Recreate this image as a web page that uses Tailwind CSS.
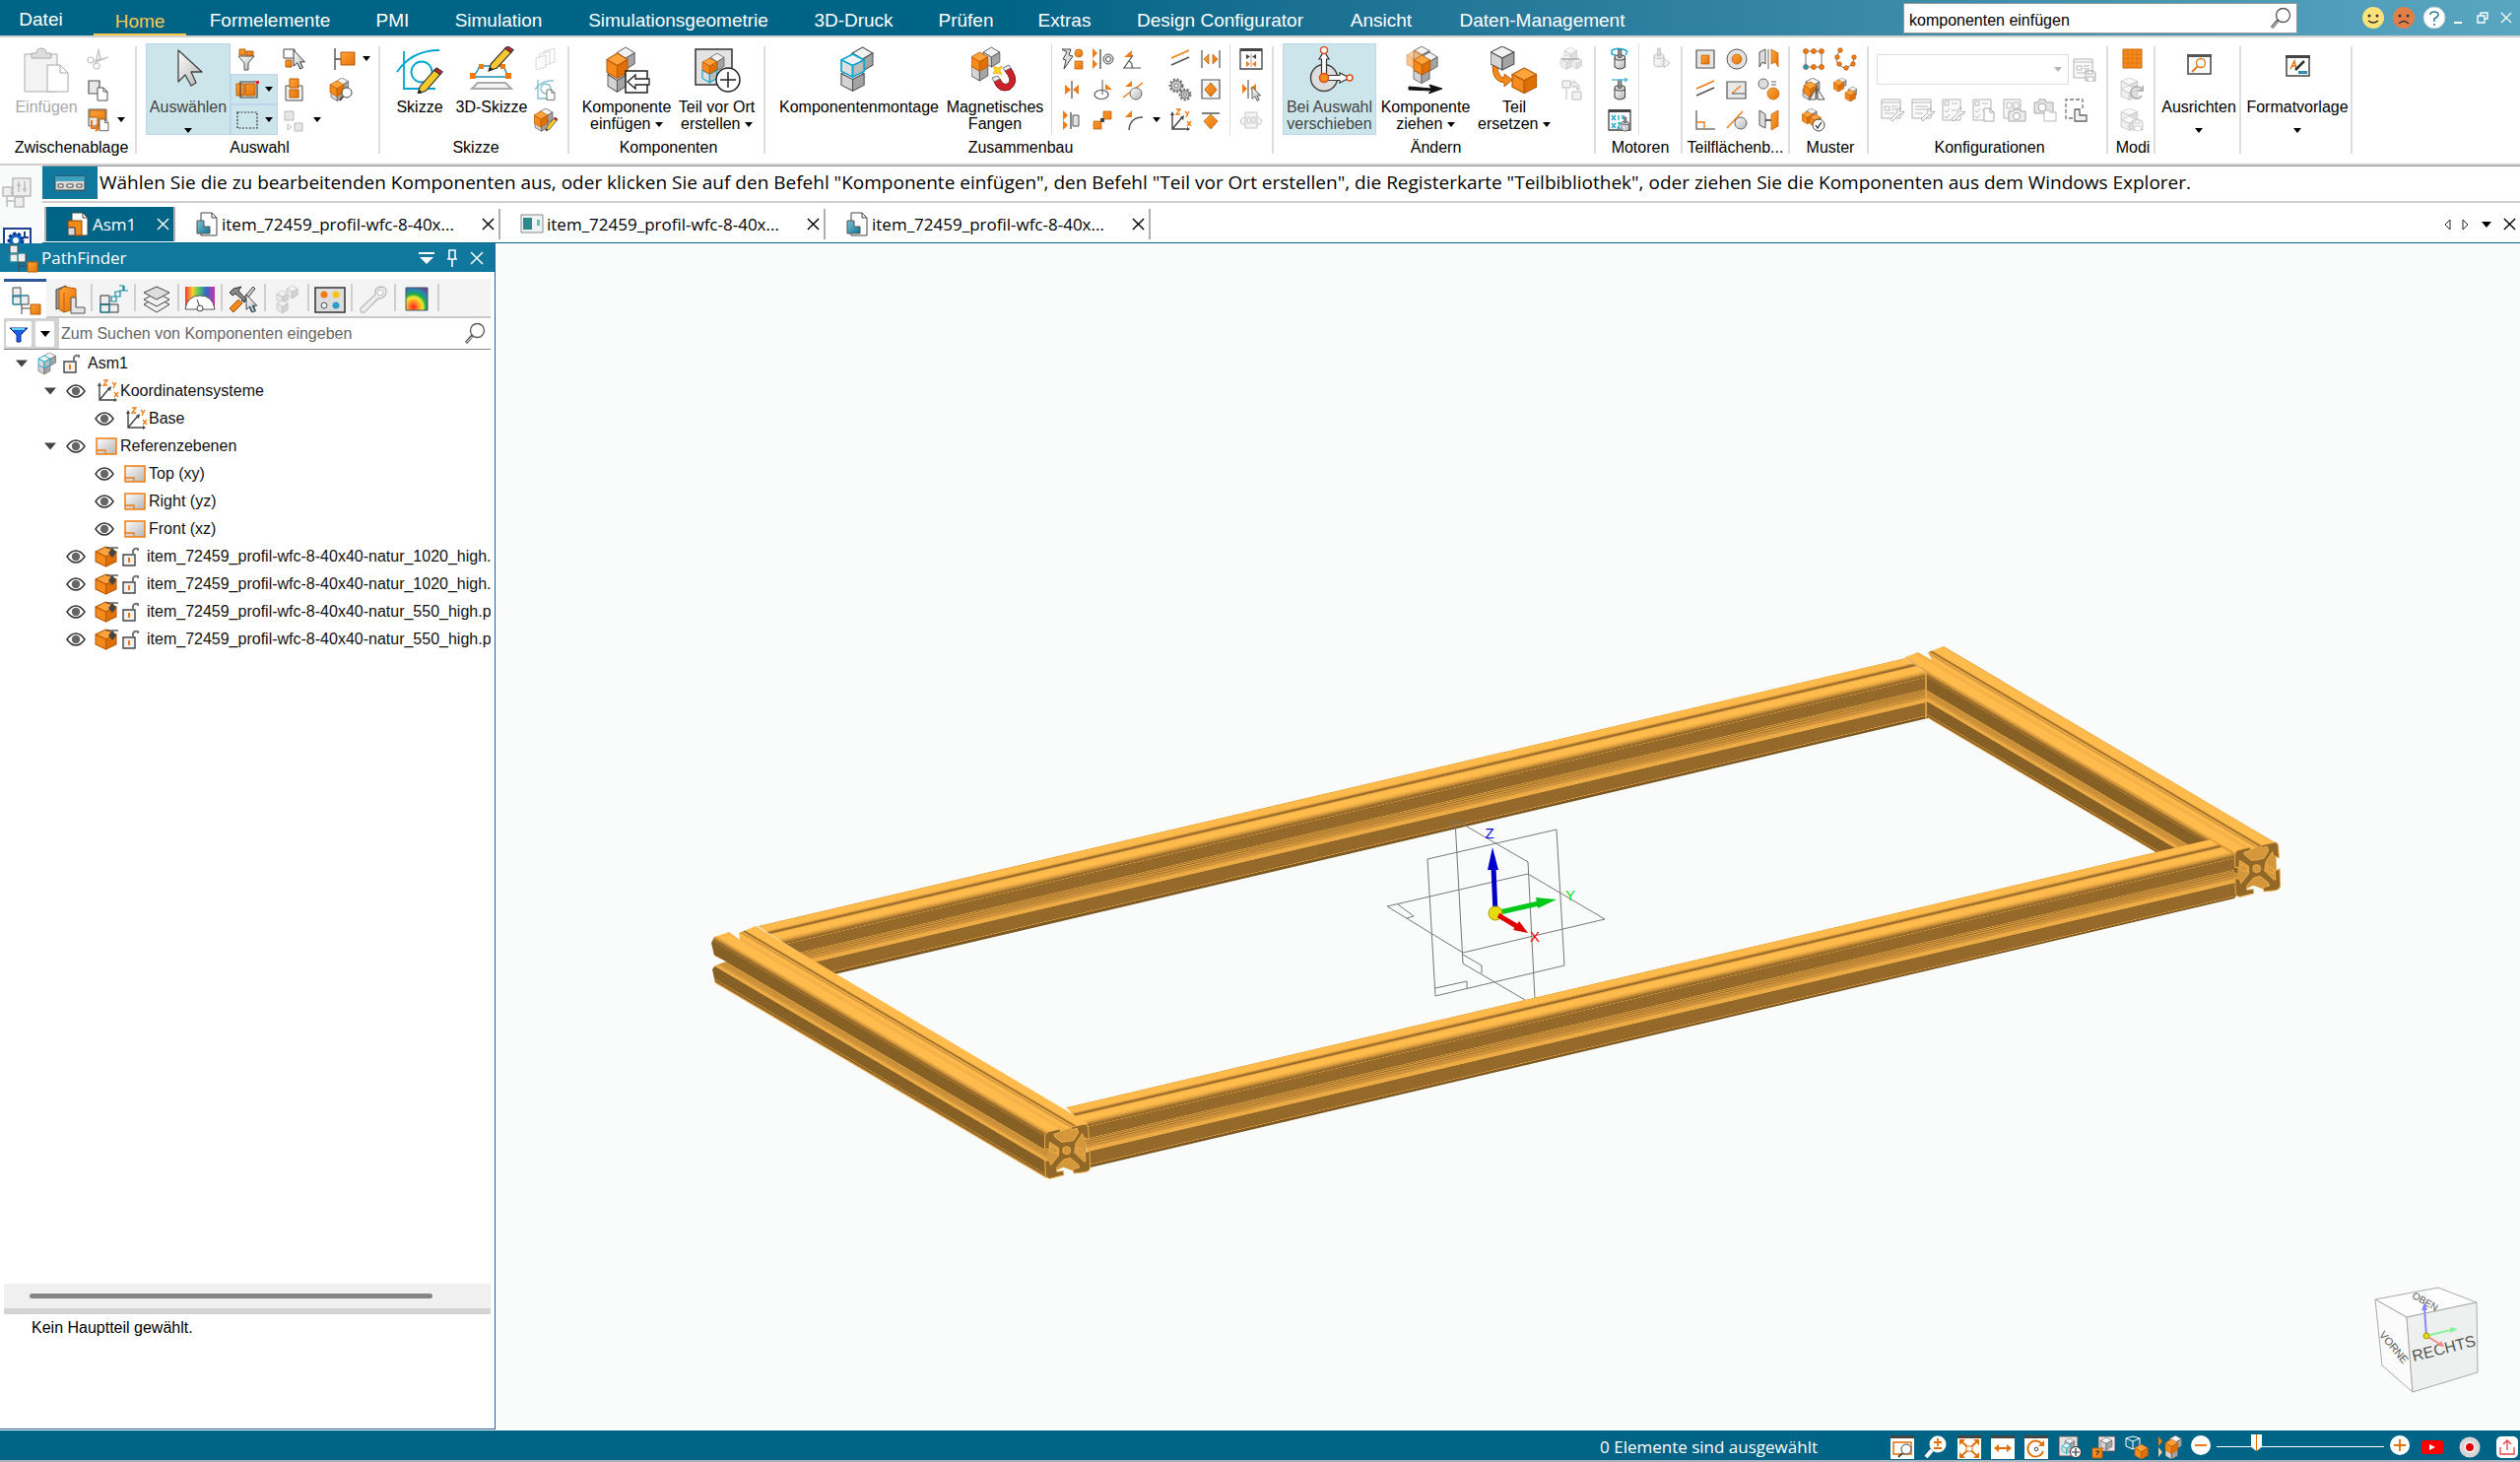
<!DOCTYPE html>
<html lang="de">
<head>
    <meta charset="UTF-8">
    <title>Asm1</title>
    <script src="https://cdn.jsdelivr.net/npm/@tailwindcss/browser@4"></script>
</head>
<body class="flex flex-col h-screen overflow-hidden bg-white text-base text-black font-['Liberation_Sans',Arial,sans-serif]">

    <!-- Icon library -->
    <svg class="absolute w-0 h-0" aria-hidden="true">
        <defs>
            <linearGradient id="gO" x1="0" y1="0" x2="1" y2="1"><stop offset="0" stop-color="#ffa53a"/><stop offset="1" stop-color="#e57208"/></linearGradient>
            <linearGradient id="gG" x1="0" y1="0" x2="1" y2="1"><stop offset="0" stop-color="#fff"/><stop offset="1" stop-color="#b4b4b4"/></linearGradient>
            <linearGradient id="gB" x1="0" y1="0" x2="1" y2="1"><stop offset="0" stop-color="#7cc4d8"/><stop offset="1" stop-color="#12718f"/></linearGradient>
            <linearGradient id="gRain" x1="0" y1="0" x2="1" y2="0"><stop offset="0" stop-color="#f33"/><stop offset=".25" stop-color="#fc3"/><stop offset=".45" stop-color="#5c5"/><stop offset=".7" stop-color="#36c"/><stop offset="1" stop-color="#c3a"/></linearGradient>
            <radialGradient id="gHeat" cx=".35" cy=".85" r=".95"><stop offset="0" stop-color="#f22"/><stop offset=".3" stop-color="#fa2"/><stop offset=".45" stop-color="#ee3"/><stop offset=".6" stop-color="#2a4"/><stop offset=".8" stop-color="#28b"/><stop offset="1" stop-color="#748"/></radialGradient>
            <!-- isometric cubes, 14 x 16 -->
            <g id="cubeO" stroke="#b85c08" stroke-width=".7" stroke-linejoin="round"><path d="M7 0 14 4 7 8 0 4Z" fill="#ffa43c"/><path d="M0 4 7 8V16L0 12Z" fill="#f5891a"/><path d="M14 4 7 8V16L14 12Z" fill="#e06f06"/></g>
            <g id="cubeG" stroke="#555" stroke-width=".7" stroke-linejoin="round"><path d="M7 0 14 4 7 8 0 4Z" fill="#f2f2f2"/><path d="M0 4 7 8V16L0 12Z" fill="#d4d4d4"/><path d="M14 4 7 8V16L14 12Z" fill="#a4a4a4"/></g>
            <g id="cubeC" stroke="#00a5cf" stroke-width="1" stroke-linejoin="round"><path d="M7 0 14 4 7 8 0 4Z" fill="#f2f2f2"/><path d="M0 4 7 8V16L0 12Z" fill="#dedede"/><path d="M14 4 7 8V16L14 12Z" fill="#bcbcbc"/></g>
            <g id="ptr"><path d="M0 0V17L4 13.500 7 20 10 18.500 7 12.500H12Z" fill="url(#gG)" stroke="#333" stroke-linejoin="round"/></g>
            <g id="pen"><path d="M0 24 2 17 14 2 19 6 7 21Z" fill="#f7c92e" stroke="#333"/><path d="M14 2 16 0 21 3.500 19 6Z" fill="#d8232a" stroke="#333"/><path d="M0 24 1 20 4 22Z" fill="#222"/></g>
            <g id="page"><path d="M0 0H6L10 4V13H0Z" fill="#fff" stroke="#555"/><path d="M6 0V4H10" fill="none" stroke="#555"/></g>
            <g id="floppy"><path d="M0 0H8L10 2V10H0Z" fill="#e4e4e4" stroke="#555"/><path d="M2 0H7V3H2ZM2 10V6H8V10" fill="#fff" stroke="#555" stroke-width=".8"/></g>
            <g id="wrench"><path d="M0 12 7 5Q6 1 10 0L9 3 11 5 14 4Q13 8 9 7L2 14Z" fill="#f4f4f4" stroke="#555" stroke-width=".9"/></g>
            <g id="cyl"><path d="M0 8V17Q5 21 10 17V8" fill="url(#gG)" stroke="#444"/><ellipse cx="5" cy="8" rx="5" ry="2.500" fill="#ddd" stroke="#444"/><path d="M3.500 0H6.500V8H3.500Z" fill="#999" stroke="#444" stroke-width=".8"/></g>
        </defs>

        <symbol id="caret" viewBox="0 0 10 6"><path d="M0 0H10L5 6Z" fill="currentColor"/></symbol>
        <symbol id="close" viewBox="0 0 14 14"><path d="M1 1 13 13M13 1 1 13" stroke="currentColor" stroke-width="1.500" fill="none"/></symbol>
        <symbol id="glass" viewBox="0 0 24 24"><circle cx="14.500" cy="8.500" r="7" fill="#fff" stroke="#555" stroke-width="1.300"/><path d="M9.500 13.500 3 21" stroke="#555" stroke-width="3"/><path d="M9 14.500 3.500 20.500" stroke="#fff" stroke-width="1"/></symbol>

        <!-- large ribbon icons -->
        <symbol id="b-paste" viewBox="0 0 48 48"><path d="M2 8H35V46H2Z" fill="#f3f3f3" stroke="#aaa"/><path d="M9 12V7H14Q14 2 19 2T24 7H29V12Z" fill="#ddd" stroke="#aaa"/><path d="M25 19H38L46 27V46H25Z" fill="#fff" stroke="#aaa"/><path d="M38 19V27H46" fill="none" stroke="#aaa"/></symbol>
        <symbol id="b-select" viewBox="0 0 48 48"><path d="M14 4V36L21 29 27 40 32 37 27 26H38Z" fill="url(#gG)" stroke="#444" stroke-width="1.300" stroke-linejoin="round"/></symbol>
        <symbol id="b-sketch" viewBox="0 0 48 48"><path d="M8 5V43H40M1 26Q16 4 44 4" fill="none" stroke="#00a5cf" stroke-width="1.800"/><circle cx="26" cy="26" r="10.500" fill="none" stroke="#00a5cf" stroke-width="1.800"/><use href="#pen" transform="translate(22 22) scale(1.200 1.100)"/></symbol>
        <symbol id="b-sketch3d" viewBox="0 0 48 48"><path d="M10 37H38L44 43H4Z" fill="#f4f4f4" stroke="#aaa" stroke-width="2"/><path d="M5 31Q9 27 12 20H36L41 31Z" fill="#fff" stroke="#1f8fb0" stroke-width="1.500"/><g fill="#f07a10"><path d="M2 27H8V33H2ZM38 27H44V33H38ZM11 18H16V23H11ZM33 18H38V23H33Z"/></g><use href="#pen" transform="translate(21 0) scale(1.200 1.050)"/></symbol>
        <symbol id="b-insert" viewBox="0 0 48 48"><use href="#cubeG" transform="translate(14 1) scale(1.300 1.400)"/><use href="#cubeG" transform="translate(5 23) scale(1.350 1.450)"/><use href="#cubeO" transform="translate(4 7) scale(1.500 1.600)"/><path d="M23 25H45V47H23Z" fill="#fff" stroke="#222" stroke-width="1.500"/><path d="M25 36 33 29V33H47V39H33V43Z" fill="#fff" stroke="#222" stroke-width="1.300"/></symbol>
        <symbol id="b-inplace" viewBox="0 0 48 48"><path d="M2 3H39V39H2Z" fill="#e3e3e3" stroke="#333" stroke-width="1.500"/><use href="#cubeG" transform="translate(17 7) scale(1 1.100)"/><use href="#cubeC" transform="translate(9 20) scale(1.050 1.050)"/><use href="#cubeO" transform="translate(9 12) scale(1.050 1)"/><circle cx="35" cy="34" r="12" fill="#fff" stroke="#222" stroke-width="1.500"/><path d="M35 26V42M27 34H43" stroke="#222" stroke-width="1.500"/></symbol>
        <symbol id="b-mount" viewBox="0 0 48 48"><use href="#cubeG" transform="translate(17 1) scale(1.500 1.500)"/><use href="#cubeG" transform="translate(6 22) scale(1.650 1.450)"/><use href="#cubeC" transform="translate(6 8) scale(1.650 1.450)"/></symbol>
        <symbol id="b-magnet" viewBox="0 0 48 48"><use href="#cubeG" transform="translate(12 1) scale(1.200 1.250)"/><use href="#cubeG" transform="translate(0 15) scale(1.200 1.250)"/><use href="#cubeO" transform="translate(0 6) scale(1.200 1.200)"/><path d="M23 36Q28 48 39 44Q50 36 40 22L34 25Q42 34 37 38Q32 40 29 33Z" fill="#cc2229" stroke="#861016"/><path d="M40 22 34 25 32 22 38 19ZM23 36 29 33 27 30 21 32Z" fill="#eee" stroke="#777"/><path d="M22 20 27 22 31 20 29 25 31 29 26 27 22 28 24 24Z" fill="#ffd21e" stroke="#d89a00" stroke-width=".6"/></symbol>
        <symbol id="b-move" viewBox="0 0 48 48"><circle cx="18" cy="32" r="13.500" fill="#ddd" stroke="#444" stroke-width="1.500"/><path d="M15.500 32V13H13L18 5 23 13H20.500V29.500H34V27L44 32 34 37V34.500H18Z" fill="#fff" stroke="#333" stroke-width="1.200"/><g fill="#fff" stroke="#d8501c" stroke-width="1.500"><circle cx="18" cy="4" r="3.500"/><circle cx="44" cy="32" r="3"/><circle cx="18" cy="32" r="4.500" fill="#f98b1c"/></g></symbol>
        <symbol id="b-drag" viewBox="0 0 48 48"><use href="#cubeG" transform="translate(12 0) scale(1.150)"/><use href="#cubeG" transform="translate(20 6) scale(1.150 1.200)"/><use href="#cubeG" transform="translate(12 20) scale(1.150 1.100)"/><use href="#cubeO" opacity=".5" transform="translate(5 4) scale(1.200)"/><use href="#cubeO" transform="translate(12 9) scale(1.200 1.250)"/><path d="M7 41 30 43 28 39 41 43 27 48 30 45 7 44Z" fill="#111" stroke="#111"/></symbol>
        <symbol id="b-replace" viewBox="0 0 48 48"><use href="#cubeG" transform="translate(0 0) scale(1.700 1.500)"/><use href="#cubeO" transform="translate(22 22) scale(1.750 1.600)"/><path d="M2 20Q2 36 14 37V41L22 34 14 28V32Q8 31 7 22Z" fill="#f58a1c" stroke="#b85c08"/></symbol>
        <symbol id="b-align" viewBox="0 0 48 48"><path d="M13 9H36V28H13Z" fill="#fff" stroke="#444" stroke-width="1.500"/><path d="M12 8H37V11H12Z" fill="#555"/><circle cx="26" cy="17" r="4.500" fill="#fff" stroke="#e8770f" stroke-width="1.300"/><path d="M23 20 17 26" stroke="#e8770f" stroke-width="1.800"/></symbol>
        <symbol id="b-style" viewBox="0 0 48 48"><path d="M13 10H36V30H13Z" fill="#fff" stroke="#444" stroke-width="1.500"/><path d="M12 9H37V12H12Z" fill="#444"/><path d="M17 23 21 15 23 23M18 20H23" fill="none" stroke="#e8770f" stroke-width="1.500"/><path d="M22 24 31 15" stroke="#333" stroke-width="2.500"/><path d="M25 25H34V28H25Z" fill="#2c8fb0"/></symbol>

        <!-- small ribbon icons -->
        <symbol id="s-cut" viewBox="0 0 24 24"><g fill="none" stroke="#c4c4c4" stroke-width="1.200"><circle cx="5" cy="13" r="3"/><circle cx="11" cy="19" r="3"/><path d="M8 14 23 10 11 15M10 16 13 2 15 11Z" fill="#eee"/></g></symbol>
        <symbol id="s-copy" viewBox="0 0 24 24"><path d="M3 3H14V16H3Z" fill="#e8e8e8" stroke="#555" stroke-width="1.200"/><use href="#page" transform="translate(12 10)"/></symbol>
        <symbol id="s-pasteas" viewBox="0 0 24 24"><path d="M3 1H21V18H3Z" fill="#e9e9e9" stroke="#555"/><path d="M4 2H20V17H12V9H4Z" fill="url(#gO)" stroke="#b85c08"/><path d="M6 12V20H13M10 17 14 20 10 23" fill="none" stroke="#e8770f" stroke-width="2"/><use href="#page" transform="translate(14 11) scale(.9)"/></symbol>
        <symbol id="s-filter" viewBox="0 0 24 24"><path d="M5 2H11V8H5ZM12 4H19V9H12Z" fill="url(#gO)" stroke="#b85c08"/><path d="M4 9H20L14 16V23H10V16Z" fill="url(#gG)" stroke="#555"/></symbol>
        <symbol id="s-box" viewBox="0 0 24 24"><path d="M1 6H9V18H1ZM10 6H20V18H10Z" fill="url(#gO)" stroke="#b85c08"/><path d="M5 4H22V20H5Z" fill="none" stroke="#444" stroke-width="1.200"/><path d="M21 3H24V6H21Z" fill="#e22"/></symbol>
        <symbol id="s-dash" viewBox="0 0 24 24"><path d="M2 4H22V20H2Z" fill="none" stroke="#333" stroke-width="1.200" stroke-dasharray="2 1.500"/></symbol>
        <symbol id="s-selptr" viewBox="0 0 24 24"><path d="M2 2H13V11H2Z" fill="#fff" stroke="#444"/><path d="M4 13H10V20H4Z" fill="url(#gO)" stroke="#b85c08"/><use href="#ptr" transform="translate(12 3) scale(.95)"/></symbol>
        <symbol id="s-stack" viewBox="0 0 24 24"><path d="M4 8H21V23H4Z" fill="#ececec" stroke="#555"/><path d="M8 1H17V10H8ZM8 12H17V20H8Z" fill="url(#gO)" stroke="#b85c08"/></symbol>
        <symbol id="s-swap" viewBox="0 0 24 24"><g fill="#e6e6e6" stroke="#bbb"><path d="M3 3H12V12H3ZM13 15H21V23H13Z"/><path d="M6 16 10 19 6 22Z" fill="#fff"/></g></symbol>
        <symbol id="s-flag" viewBox="0 0 24 24"><path d="M2 1V23M2 12H8" stroke="#444" stroke-width="1.300"/><path d="M8 5H22V18H8Z" fill="url(#gO)" stroke="#b85c08"/></symbol>
        <symbol id="s-findcube" viewBox="0 0 24 24"><use href="#cubeG" transform="translate(7 0) scale(.9)"/><use href="#cubeG" transform="translate(2 9) scale(.9)"/><use href="#cubeO" transform="translate(1 3)"/><circle cx="18" cy="15" r="5" fill="#fff" stroke="#444"/><path d="M14 19 11 23" stroke="#444" stroke-width="2"/></symbol>
        <symbol id="s-planes" viewBox="0 0 24 24"><g fill="#fcfcfc" stroke="#d8d8d8"><path d="M10 4 21 1V15L10 18Z"/><path d="M5 7 16 4V17L5 20Z"/><path d="M2 11 12 8V20L2 23Z"/></g></symbol>
        <symbol id="s-skcopy" viewBox="0 0 24 24"><path d="M4 2V21H16M1 12Q8 2 20 3" fill="none" stroke="#7dbdd0" stroke-width="1.300"/><circle cx="12" cy="11" r="5" fill="none" stroke="#7dbdd0" stroke-width="1.300"/><use href="#page" transform="translate(13 12) scale(.8)"/></symbol>
        <symbol id="s-skcube" viewBox="0 0 24 24"><use href="#cubeG" transform="translate(5 0)"/><use href="#cubeG" transform="translate(1 8) scale(.95)"/><use href="#cubeO" transform="translate(0 3)"/><use href="#pen" transform="translate(12 9) scale(.58)"/></symbol>

        <symbol id="s-flash" viewBox="0 0 24 24"><path d="M2 2H11L9 8 13 9 4 22 6 13 3 12 7 5Z" fill="#ddd" stroke="#444"/><circle cx="19" cy="6" r="4" fill="url(#gO)" stroke="#b85c08" stroke-width=".7"/><path d="M15 14H23V22H15Z" fill="url(#gO)" stroke="#b85c08" stroke-width=".7"/></symbol>
        <symbol id="s-axial" viewBox="0 0 24 24"><path d="M2 1 7 6 2 11ZM2 12 7 17 2 22Z" fill="#f07c12"/><path d="M10 2V22" stroke="#888" stroke-width="2"/><circle cx="18" cy="12" r="5" fill="#ddd" stroke="#555"/><circle cx="18" cy="12" r="2.500" fill="#fff" stroke="#555"/></symbol>
        <symbol id="s-angle" viewBox="0 0 24 24"><path d="M3 10 11 3V10Z" fill="#f07c12"/><path d="M12 8 3 21H20M8 14Q12 16 11 21" fill="none" stroke="#555" stroke-width="1.200"/></symbol>
        <symbol id="s-par" viewBox="0 0 24 24"><path d="M3 11 21 3" stroke="#f07c12" stroke-width="1.500"/><path d="M3 18 21 10" stroke="#555" stroke-width="1.500"/></symbol>
        <symbol id="s-gap" viewBox="0 0 24 24"><path d="M3 3V21M21 3V21" stroke="#777" stroke-width="1.500"/><path d="M10 7V17L5 12ZM14 7V17L19 12Z" fill="url(#gO)" stroke="#b85c08" stroke-width=".7"/></symbol>
        <symbol id="s-mate" viewBox="0 0 24 24"><path d="M12 3V21" stroke="#888" stroke-width="1.800"/><path d="M5 7 11 12 5 17ZM19 7 13 12 19 17Z" fill="#f07c12"/></symbol>
        <symbol id="s-pivot" viewBox="0 0 24 24"><path d="M12 2V17" stroke="#555"/><ellipse cx="11" cy="17" rx="7" ry="4.500" fill="none" stroke="#555" stroke-width="1.200"/><path d="M15 6V12H22Z" fill="#f07c12"/></symbol>
        <symbol id="s-tan" viewBox="0 0 24 24"><path d="M2 20 22 5" stroke="#f07c12" stroke-width="1.500"/><path d="M4 9 11 3V9Z" fill="#f07c12"/><circle cx="15" cy="16" r="6" fill="url(#gG)" stroke="#666"/></symbol>
        <symbol id="s-gears" viewBox="0 0 24 24"><g fill="#ccc" stroke="#777"><circle cx="8" cy="8" r="6" stroke-dasharray="2 1.500" stroke-width="3"/><circle cx="8" cy="8" r="5"/><circle cx="8" cy="8" r="2" fill="#fff"/><circle cx="17" cy="17" r="5" stroke-dasharray="2 1.500" stroke-width="3"/><circle cx="17" cy="17" r="4"/><circle cx="17" cy="17" r="1.500" fill="#fff"/></g></symbol>
        <symbol id="s-dia" viewBox="0 0 24 24"><path d="M3 2H21V21H3Z" fill="#f4f4f4" stroke="#555" stroke-width="1.200"/><path d="M12 5 18 12 12 19 6 12Z" fill="url(#gO)" stroke="#b85c08"/></symbol>
        <symbol id="s-insmate" viewBox="0 0 24 24"><path d="M3 2 8 7 3 12ZM3 12 8 17 3 22Z" fill="#f07c12"/><path d="M11 4V21" stroke="#666" stroke-width="1.500"/><path d="M13 7H19V18H13Z" fill="#e2e2e2" stroke="#555"/></symbol>
        <symbol id="s-link" viewBox="0 0 24 24"><path d="M13 3H21V11H13ZM3 13H11V21H3Z" fill="url(#gO)" stroke="#b85c08" stroke-width=".7"/><path d="M10 10H14V14H10Z" fill="#444"/></symbol>
        <symbol id="s-path" viewBox="0 0 24 24"><path d="M4 9 11 2V9Z" fill="#f07c12"/><path d="M8 22Q9 9 22 9" fill="none" stroke="#555" stroke-width="1.400"/></symbol>
        <symbol id="s-axes" viewBox="0 0 24 24"><path d="M4 5V21H20M4 21 14 9" fill="none" stroke="#444" stroke-width="1.400"/><path d="M2 7 4 3 6 7ZM19 19 22 21 19 23ZM12 9 16 7 15 12Z" fill="#444"/><path d="M8 1H12L8 6H12M17 3 19 5.500M21 3 18 9M19 13 23 18M23 13 19 18" fill="none" stroke="#f07c12" stroke-width="1.300"/></symbol>
        <symbol id="s-cam" viewBox="0 0 24 24"><path d="M3 5H21" stroke="#555" stroke-width="1.500"/><path d="M12 6 19 13 12 21 5 13Z" fill="url(#gO)" stroke="#b85c08" stroke-width=".7"/></symbol>
        <symbol id="s-winmate" viewBox="0 0 24 24"><path d="M1 2H23V22H1Z" fill="#fff" stroke="#444" stroke-width="1.300"/><path d="M1 1H23V4H1Z" fill="#444"/><path d="M7 7 11 9.500 7 12ZM17 7 13 9.500 17 12Z" fill="#444"/><path d="M12 6V20" stroke="#888" stroke-width=".8"/><path d="M7 14 11 17 7 20ZM17 14 13 17 17 20Z" fill="#f07c12"/></symbol>
        <symbol id="s-mateptr" viewBox="0 0 24 24"><path d="M9 2V21" stroke="#888" stroke-width="1.600"/><path d="M3 6 8 11 3 16ZM17 6 11 11 17 14Z" fill="#f07c12"/><use href="#ptr" transform="translate(13 9) scale(.72)"/></symbol>
        <symbol id="s-ring" viewBox="0 0 24 24"><g fill="#f4f4f4" stroke="#c8c8c8"><ellipse cx="12" cy="13" rx="11" ry="5"/><path d="M6 4H18V20H6Z"/><path d="M8 9H11V15H8ZM13 9H16V15H13Z"/></g></symbol>

        <symbol id="s-gmove" viewBox="0 0 24 24"><g opacity=".35"><use href="#cubeG" transform="translate(5 0) scale(.9)"/><use href="#cubeG" transform="translate(1 8) scale(.9)"/><use href="#cubeG" transform="translate(12 10) scale(.75)"/><path d="M3 12H20" stroke="#333" stroke-width="2"/></g></symbol>
        <symbol id="s-gswap" viewBox="0 0 24 24"><g opacity=".35" stroke="#444" fill="#ddd"><path d="M3 3H11V10H3ZM13 14H22V22H13Z"/><path d="M7 11V22M11 6 15 3V5Q20 5 20 12H18Q18 8 15 8V10Z"/></g></symbol>
        <symbol id="s-motrot" viewBox="0 0 24 24"><use href="#cyl" transform="translate(7 2) scale(1.050)"/><path d="M4 3Q12-1 20 4M4 3V7L8 8M20 4 18 8" fill="none" stroke="#1ba6cc" stroke-width="1.500"/></symbol>
        <symbol id="s-motlin" viewBox="0 0 24 24"><use href="#cyl" transform="translate(7 2) scale(1.050)"/><path d="M4 2H20M17 0 20 2 17 4" fill="none" stroke="#5bbcd8" stroke-width="1.300"/></symbol>
        <symbol id="s-motvar" viewBox="0 0 24 24"><path d="M1 2H23V22H1Z" fill="#fff" stroke="#444" stroke-width="1.300"/><path d="M1 1H23V4H1Z" fill="#444"/><path d="M4 7 8 12M8 7 4 12M11 7V12M14 8H17M14 10H17M4 15 8 20M8 15 4 20M10 15H13L10 20H13" fill="none" stroke="#1ba6cc" stroke-width="1.300"/><use href="#cyl" transform="translate(14 9) scale(.75)"/></symbol>
        <symbol id="s-motsim" viewBox="0 0 24 24"><g opacity=".35"><use href="#cyl" transform="translate(6 1)"/><path d="M16 11 22 16 16 21Z" fill="#ddd" stroke="#555"/></g></symbol>
        <symbol id="s-fsq" viewBox="0 0 24 24"><path d="M3 3H21V21H3Z" fill="#e6e6e6" stroke="#555" stroke-width="1.200"/><path d="M8 8H16V17H8Z" fill="url(#gO)" stroke="#b85c08" stroke-width=".7"/></symbol>
        <symbol id="s-fcirc" viewBox="0 0 24 24"><circle cx="12" cy="12" r="10" fill="#e2e2e2" stroke="#555"/><circle cx="12" cy="12" r="5" fill="url(#gO)" stroke="#b85c08" stroke-width=".7"/></symbol>
        <symbol id="s-fmir" viewBox="0 0 24 24"><path d="M3 5 9 2V17L6 15 3 20Z" fill="#ddd" stroke="#555"/><path d="M12 2V22" stroke="#666"/><path d="M15 2 22 6V20L19 15 15 17Z" fill="url(#gO)" stroke="#b85c08" stroke-width=".7"/></symbol>
        <symbol id="s-fcop" viewBox="0 0 24 24"><path d="M2 4H21V21H2Z" fill="#e8e8e8" stroke="#555" stroke-width="1.200"/><path d="M7 16 16 8" stroke="#f07c12" stroke-width="1.400"/><path d="M7 16H20" stroke="#555"/></symbol>
        <symbol id="s-feq" viewBox="0 0 24 24"><circle cx="7" cy="6" r="5" fill="#ddd" stroke="#666"/><path d="M15 4H20M15 7H20" stroke="#666"/><circle cx="17" cy="16" r="6" fill="url(#gO)" stroke="#b85c08" stroke-width=".7"/></symbol>
        <symbol id="s-fperp" viewBox="0 0 24 24"><path d="M3 2V21H22" fill="none" stroke="#777" stroke-width="1.500"/><path d="M3 14H11V21" fill="none" stroke="#f07c12" stroke-width="1.400"/></symbol>
        <symbol id="s-ftan" viewBox="0 0 24 24"><path d="M2 20 18 3" stroke="#f07c12" stroke-width="1.500"/><circle cx="16" cy="15" r="6" fill="url(#gG)" stroke="#666"/></symbol>
        <symbol id="s-foff" viewBox="0 0 24 24"><path d="M3 2 9 6V20L3 17Z" fill="#ddd" stroke="#555"/><path d="M9 12H15" stroke="#333" stroke-width="1.500"/><path d="M15 6 22 2V18L15 22Z" fill="url(#gO)" stroke="#b85c08" stroke-width=".7"/></symbol>
        <symbol id="s-prect" viewBox="0 0 24 24"><path d="M4 4H20V20H4Z" fill="none" stroke="#777"/><g fill="#f07c12" stroke="#a84f05" stroke-width=".6"><circle cx="4" cy="4" r="2.500"/><circle cx="12" cy="4" r="2.500"/><circle cx="20" cy="4" r="2.500"/><circle cx="12" cy="20" r="2.500"/><circle cx="20" cy="20" r="2.500"/><circle cx="4" cy="20" r="2.500" fill="#1f9cc0"/></g></symbol>
        <symbol id="s-pcirc" viewBox="0 0 24 24"><path d="M6 4Q-2 16 11 21Q20 20 21 11" fill="none" stroke="#777"/><g fill="#f07c12" stroke="#a84f05" stroke-width=".6"><circle cx="7" cy="3" r="2.300"/><circle cx="4" cy="10" r="2.300"/><circle cx="6" cy="17" r="2.300"/><circle cx="13" cy="21" r="2.300"/><circle cx="20" cy="17" r="2.300"/><circle cx="21" cy="10" r="2.300"/></g></symbol>
        <symbol id="s-pmir" viewBox="0 0 24 24"><use href="#cubeG" transform="translate(4 0)"/><use href="#cubeG" transform="translate(1 8) scale(.9)"/><use href="#cubeO" transform="translate(2 4) scale(.95)"/><path d="M15 8V22M14 11V22H8ZM16 11V22H23Z" fill="#eee" stroke="#555"/></symbol>
        <symbol id="s-pcopy" viewBox="0 0 24 24"><use href="#cubeG" transform="translate(4 0) scale(.65)"/><use href="#cubeO" transform="translate(0 2) scale(.75)"/><use href="#cubeG" transform="translate(15 9) scale(.65)"/><use href="#cubeO" transform="translate(12 12) scale(.75)"/></symbol>
        <symbol id="s-pdup" viewBox="0 0 24 24"><use href="#cubeG" transform="translate(4 0) scale(.8)"/><use href="#cubeO" transform="translate(0 3) scale(.8)"/><use href="#cubeO" transform="translate(8 6) scale(.8)"/><circle cx="17" cy="17" r="6" fill="#fff" stroke="#444"/><path d="M14 17 16 20 20 14" fill="none" stroke="#333" stroke-width="1.300"/></symbol>

        <symbol id="s-win" viewBox="0 0 24 24"><path d="M1 1H20V20H1Z" fill="#f6f6f6" stroke="#666"/><path d="M1 4H20M4 8H9V12H4ZM11 8H17M11 11H17M4 15H14" fill="none" stroke="#777"/></symbol>
        <symbol id="c-save" viewBox="0 0 24 24"><use href="#s-win" width="24" height="24"/><use href="#floppy" transform="translate(13 13)"/></symbol>
        <symbol id="c-edit" viewBox="0 0 24 24"><use href="#s-win" width="24" height="24"/><use href="#wrench" transform="translate(10 9)"/></symbol>
        <symbol id="c-expl" viewBox="0 0 24 24"><path d="M1 1H20V20H1Z" fill="#f6f6f6" stroke="#666"/><path d="M1 4H20M4 8H17M4 11H17M4 15H12" fill="none" stroke="#777"/><use href="#wrench" transform="translate(10 9)"/></symbol>
        <symbol id="c-list" viewBox="0 0 24 24"><path d="M1 1H19V22H1Z" fill="#f6f6f6" stroke="#666"/><path d="M3 3H7V7H3ZM10 5H16M3 12 5 14 8 10M10 12H16M3 18 5 20 8 16" fill="none" stroke="#777"/><use href="#wrench" transform="translate(10 9)"/></symbol>
        <symbol id="c-doc" viewBox="0 0 24 24"><path d="M1 1H19V22H1Z" fill="#f6f6f6" stroke="#666"/><path d="M3 3H7V7H3ZM10 5H16M3 12 5 14 8 10M10 12H13M3 18 5 20 8 16" fill="none" stroke="#777"/><use href="#page" transform="translate(12 10)"/></symbol>
        <symbol id="c-cam" viewBox="0 0 24 24"><path d="M1 1H18V20H1Z" fill="#f6f6f6" stroke="#666"/><path d="M4 4H9V10H4ZM11 4H16V10H11Z" fill="none" stroke="#777"/><path d="M6 13H10L11 11H17L18 13H23V23H6Z" fill="#ddd" stroke="#555"/><circle cx="14" cy="18" r="3.500" fill="#fff" stroke="#555"/></symbol>
        <symbol id="c-camdir" viewBox="0 0 24 24"><path d="M1 4H5L6 1H12L13 4H20V15H1Z" fill="#ccc" stroke="#555"/><circle cx="9" cy="9" r="4" fill="#fff" stroke="#555"/><path d="M11 12H16L17 14H23V23H11Z" fill="#fff" stroke="#777"/></symbol>
        <symbol id="c-zone" viewBox="0 0 24 24"><path d="M19 10V1H2V20H9" fill="none" stroke="#777" stroke-width="1.300" stroke-dasharray="4 2"/><path d="M11 11H16V17H23V23H11Z" fill="#f2f2f2" stroke="#666" stroke-width="1.300"/></symbol>
        <symbol id="m-grid" viewBox="0 0 24 24"><path d="M3 2H22V21H3Z" fill="#f58a1c" stroke="#c9660b"/><path d="M8 2V21M12.500 2V21M17 2V21M3 7H22M3 11.500H22M3 16H22" stroke="#d9750f" stroke-width=".8"/></symbol>
        <symbol id="m-ref" viewBox="0 0 24 24"><g opacity=".35"><use href="#cubeG" transform="translate(1 0) scale(1.200 .9)"/><use href="#cubeG" transform="translate(1 8) scale(1.200 .9)"/></g><path d="M22 12A6 6 0 1 0 22 18M23 8V13H18" fill="none" stroke="#b5b5b5" stroke-width="2"/></symbol>
        <symbol id="m-save" viewBox="0 0 24 24"><g opacity=".35"><use href="#cubeG" transform="translate(1 0) scale(1.200 .9)"/><use href="#cubeG" transform="translate(1 8) scale(1.200 .9)"/><use href="#floppy" transform="translate(13 12)"/></g></symbol>

        <!-- document, panel and tree icons -->
        <symbol id="d-asm" viewBox="0 0 24 26"><path d="M6 1H17L22 6V24H6Z" fill="#fff" stroke="#444"/><path d="M17 1V6H22" fill="none" stroke="#444"/><path d="M2 9H16V24H9V16H2Z" fill="#f08a1c" stroke="#8a4a05"/><path d="M2 16H9V24H2Z" fill="#d9d9d9" stroke="#444"/></symbol>
        <symbol id="d-part" viewBox="0 0 24 26"><path d="M6 1H17L22 6V24H6Z" fill="#fff" stroke="#444"/><path d="M17 1V6H22" fill="none" stroke="#444"/><path d="M2 9H9V15H15V22H2Z" fill="url(#gB)" stroke="#555"/></symbol>
        <symbol id="d-draft" viewBox="0 0 24 26"><path d="M1 3H23V21H1Z" fill="#eef3f5" stroke="#8a8a8a"/><path d="M3 6H12V18H3Z" fill="#2d8a8a"/><path d="M17 8H20V14H17Z" fill="#6fbfa8"/></symbol>
        <symbol id="p-find" viewBox="0 0 32 32"><path d="M3 3H11V12H3ZM3 11H19V20H3ZM11 11V20" fill="#eee" stroke="#444"/><path d="M3 11H11V20H3ZM11 11H19" fill="none" stroke="#19a3c9"/><path d="M12 20V30M12 24H21" fill="none" stroke="#444"/><path d="M21 20H31V30H21Z" fill="url(#gO)" stroke="#b85c08"/></symbol>
        <symbol id="p-lib" viewBox="0 0 32 32"><path d="M2 6 12 2V22L2 26Z" fill="#999" stroke="#444"/><path d="M5 7 10 3 22 5V25L10 29 5 26Z" fill="url(#gO)" stroke="#b85c08"/><path d="M10 9V29" stroke="#b85c08"/><path d="M17 14H22V24H31V30H17Z" fill="#e4e4e4" stroke="#555"/></symbol>
        <symbol id="p-alt" viewBox="0 0 32 32"><path d="M3 12H12V21H3ZM3 21H21V29H3ZM12 21V29" fill="#eee" stroke="#333"/><path d="M3 21H12V29H3ZM14 13H19V18H14ZM18 8H23V13H18ZM22 7H26M22 2H26V7H31M27 7V2" fill="none" stroke="#1587a6" stroke-width="1.200"/></symbol>
        <symbol id="p-layer" viewBox="0 0 32 32"><g fill="#f0f0f0" stroke="#444"><path d="M16 14 29 21 16 29 3 21Z"/><path d="M16 9 29 16 16 23 3 16Z"/><path d="M16 3 29 9 16 16 3 9Z" fill="#ddd"/></g></symbol>
        <symbol id="p-sens" viewBox="0 0 32 32"><path d="M1 3H31V26H1Z" fill="url(#gRain)"/><path d="M1 26Q3 12 16 12T31 26Z" fill="#fff" stroke="#555"/><path d="M13 16 16 24" stroke="#444"/><circle cx="16" cy="25" r="3" fill="#fff" stroke="#444"/></symbol>
        <symbol id="p-tool" viewBox="0 0 32 32"><path d="M2 25 11 16 15 20 6 29Z" fill="#f08a1c" stroke="#a84f05"/><path d="M14 17 26 3 28 5 17 19Z" fill="#ccc" stroke="#444"/><path d="M2 9 6 5 14 3 11 7 19 16 17 18 8 10 5 12Z" fill="#888" stroke="#333"/><path d="M20 20 27 22 29 28 24 29Z" fill="#1b6f8c"/><use href="#ptr" transform="translate(19 11) scale(.9)"/></symbol>
        <symbol id="p-gray" viewBox="0 0 32 32"><g opacity=".4"><use href="#cubeG" transform="translate(6 7) scale(.8)"/><use href="#cubeG" transform="translate(16 2) scale(.8)"/><use href="#cubeG" transform="translate(6 17) scale(.8)"/></g></symbol>
        <symbol id="p-fam" viewBox="0 0 32 32"><path d="M1 4H31V29H1Z" fill="#ddd" stroke="#333" stroke-width="1.500"/><circle cx="10" cy="11" r="3.500" fill="#f07c12"/><circle cx="22" cy="11" r="3.500" fill="#f5c518"/><circle cx="10" cy="22" r="3" fill="#eee" stroke="#555"/><circle cx="22" cy="22" r="3.500" fill="#2f9bc6"/></symbol>
        <symbol id="p-rod" viewBox="0 0 32 32"><path d="M3 25 18 11Q17 4 23 3Q30 3 29 9Q28 15 21 15L7 29Q2 30 3 25Z" fill="#eee" stroke="#bbb" stroke-width="1.300"/><circle cx="23" cy="9" r="3" fill="#fff" stroke="#bbb"/></symbol>
        <symbol id="p-heat" viewBox="0 0 32 32"><path d="M5 4H27V27H5Z" fill="url(#gHeat)" stroke="#456"/></symbol>
        <symbol id="t-eye" viewBox="0 0 20 14"><path d="M1 7Q5 1 10 1T19 7Q15 13 10 13T1 7Z" fill="#fff" stroke="#333" stroke-width="1.400"/><circle cx="10" cy="7" r="4.200" fill="#666"/></symbol>
        <symbol id="t-lock" viewBox="0 0 18 20"><path d="M1 8H13V19H1Z" fill="#f2f2f2" stroke="#444" stroke-width="1.400"/><path d="M11 8V4Q12 1 16 2V4" fill="none" stroke="#777" stroke-width="2"/><path d="M6 11H8V16H6Z" fill="#e8770f"/></symbol>
        <symbol id="t-asm" viewBox="0 0 20 22"><use href="#cubeG" transform="translate(6 0) scale(.9 .85)"/><use href="#cubeG" transform="translate(1 9) scale(.85 .8)"/><use href="#cubeC" transform="translate(1 3) scale(.85 .8)"/></symbol>
        <symbol id="t-plane" viewBox="0 0 22 18"><path d="M1 1H21V17H1Z" fill="url(#gG)" stroke="#f07c12" stroke-width="1.500"/><path d="M1 13H10V17" fill="none" stroke="#f07c12" stroke-width="1.300"/></symbol>
        <symbol id="t-part" viewBox="0 0 24 22"><use href="#cubeO" transform="translate(1 1) scale(1.500 1.250)"/><path d="M12 2H24" stroke="#444" stroke-width="1.300"/><path d="M18 2 22 7 18 12 14 7Z" fill="#444"/></symbol>

        <!-- status bar icons -->
        <symbol id="z-area" viewBox="0 0 24 24"><path d="M0 1H24V24H0Z" fill="#fff"/><path d="M0 0H24V3H0Z" fill="#444"/><path d="M3 7H21V19H3Z" fill="#fff" stroke="#e06f06" stroke-width="1.500"/><circle cx="16" cy="14" r="5" fill="#fff" stroke="#444"/><path d="M12 18 8 22" stroke="#444" stroke-width="2"/></symbol>
        <symbol id="z-zoom" viewBox="0 0 24 24"><path d="M8 15 2 22" stroke="#fff" stroke-width="4"/><circle cx="14" cy="9" r="8.500" fill="#fff"/><path d="M14 3V11M10 7H18M10 13H18" stroke="#e06f06" stroke-width="1.800"/></symbol>
        <symbol id="z-fit" viewBox="0 0 24 24"><path d="M0 1H24V24H0Z" fill="#fff"/><path d="M0 0H24V3H0Z" fill="#444"/><path d="M4 6 20 21M20 6 4 21" stroke="#e06f06" stroke-width="1.800"/><path d="M2 4H8L2 10ZM22 4H16L22 10ZM2 23H8L2 17ZM22 23H16L22 17Z" fill="#e06f06"/><path d="M9 11H15V16H9Z" fill="#fff" stroke="#e06f06"/></symbol>
        <symbol id="z-pan" viewBox="0 0 24 24"><path d="M0 1H24V24H0Z" fill="#fff"/><path d="M0 0H24V3H0Z" fill="#444"/><path d="M5 13H19" stroke="#e06f06" stroke-width="2"/><path d="M3 13 8 9V17ZM21 13 16 9V17Z" fill="#e06f06"/></symbol>
        <symbol id="z-rot" viewBox="0 0 24 24"><path d="M0 1H24V24H0Z" fill="#fff"/><path d="M0 0H24V3H0Z" fill="#444"/><path d="M18 9A8 8 0 1 0 19 16" fill="none" stroke="#e06f06" stroke-width="1.800"/><path d="M20 5V11H14Z" fill="#e06f06"/><circle cx="12" cy="14" r="1.800" fill="#fff" stroke="#444"/></symbol>
        <symbol id="z-add" viewBox="0 0 24 24"><path d="M1 1H20V21H1Z" fill="#e4e4e4" stroke="#555"/><use href="#cubeG" transform="translate(7 3) scale(.7)"/><use href="#cubeC" transform="translate(4 8) scale(.65)"/><circle cx="18" cy="17" r="5.500" fill="#fff" stroke="#333"/><path d="M18 13V21M14 17H22" stroke="#333" stroke-width="1.200"/></symbol>
        <symbol id="z-view" viewBox="0 0 24 24"><path d="M7 1H24V16H7Z" fill="#eee" stroke="#555"/><use href="#cubeG" transform="translate(9 2) scale(.85 .8)"/><path d="M1 13H11V23H1Z" fill="url(#gO)" stroke="#b85c08"/><path d="M4 16H8L5 20" fill="none" stroke="#222"/></symbol>
        <symbol id="z-style" viewBox="0 0 24 24"><path d="M8 1 15 3V11L8 14 1 11V3Z M1 3 8 6 15 3M8 6V14" fill="#0c6d8e" stroke="#fff"/><use href="#cubeO" transform="translate(10 9) scale(.95)"/></symbol>
        <symbol id="z-comp" viewBox="0 0 24 24"><path d="M0 1 4 6 0 11Z" fill="#f07c12"/><path d="M0 12 4 17 0 22Z" fill="#f6c7a0"/><use href="#cubeG" transform="translate(11 0) scale(.9)"/><use href="#cubeG" transform="translate(7 10) scale(.9)"/><use href="#cubeO" transform="translate(7 4) scale(.9)"/></symbol>
    </svg>

    <!-- Title bar with ribbon tabs -->
    <header class="flex items-center shrink-0 h-[38px] border-b-2 border-[#d0d0d0] text-[19px] text-white bg-linear-to-r from-[#006487] from-40% to-[#58a6c0]">
        <nav class="flex h-full">
            <button class="w-[95px] pr-3 pt-1">Datei</button>
            <button class="w-[94px] pt-2 text-[#ffc94a] border-b-2 border-[#ffc94a]">Home</button>
            <button class="w-[170px] pt-[6px]">Formelemente</button>
            <button class="w-[79px] pt-[6px]">PMI</button>
            <button class="w-[136px] pt-[6px]">Simulation</button>
            <button class="w-[229px] pt-[6px]">Simulationsgeometrie</button>
            <button class="w-[127px] pt-[6px]">3D-Druck</button>
            <button class="w-[101px] pt-[6px]">Prüfen</button>
            <button class="w-[99px] pt-[6px]">Extras</button>
            <button class="w-[217px] pt-[6px]">Design Configurator</button>
            <button class="w-[110px] pt-[6px]">Ansicht</button>
            <button class="w-[217px] pt-[6px]">Daten-Management</button>
        </nav>
        <div class="flex items-center ml-auto w-[400px] h-[31px] mt-px bg-white border border-[#999]">
            <input type="text" aria-label="Befehlssuche" value="komponenten einfügen" class="flex-1 h-full pt-1 pl-[5px] text-base text-black outline-none">
            <svg class="size-6 mr-1"><use href="#glass"/></svg>
        </div>
        <div class="flex items-center ml-[65px]">
            <button class="w-[31px]" aria-label="Lob"><svg class="size-6" viewBox="0 0 24 24"><circle cx="12" cy="12" r="11" fill="#fbe27a"/><circle cx="8" cy="10" r="1.500" fill="#333"/><circle cx="16" cy="10" r="1.500" fill="#333"/><path d="M7 15Q12 19 17 15" fill="none" stroke="#333" stroke-width="1.500"/></svg></button>
            <button class="w-[31px]" aria-label="Kritik"><svg class="size-6" viewBox="0 0 24 24"><circle cx="12" cy="12" r="11" fill="#e08048"/><circle cx="8" cy="10" r="1.500" fill="#333"/><circle cx="16" cy="10" r="1.500" fill="#333"/><path d="M7 18Q12 13 17 18" fill="none" stroke="#333" stroke-width="1.500"/></svg></button>
            <button class="w-[31px]" aria-label="Hilfe"><svg class="size-6" viewBox="0 0 24 24"><circle cx="12" cy="12" r="11" fill="#fff" stroke="#b9c6cc"/><path d="M8 9Q8 6 12 6T16 9Q16 11 12 13V16M12 18V20" fill="none" stroke="#2c7c99" stroke-width="1.500"/></svg></button>
            <button class="w-6" aria-label="Minimieren"><svg class="size-3" viewBox="0 0 12 12"><path d="M1 11H9" stroke="#fff" stroke-width="2"/></svg></button>
            <button class="w-6" aria-label="Wiederherstellen"><svg class="size-3" viewBox="0 0 12 12"><path d="M4 4V1H11V7H8M1 4H8V11H1Z" fill="none" stroke="#fff" stroke-width="1.400"/></svg></button>
            <button class="w-5" aria-label="Schließen"><svg class="size-3"><use href="#close"/></svg></button>
        </div>
    </header>

    <!-- Ribbon -->
    <div class="flex shrink-0 h-[130px] pt-[6px] border-b-2 border-[#cfcfcf] leading-[17px]">
        <section class="shrink-0 w-[137px]">
            <div class="flex h-[93px] pl-2">
                <button class="flex flex-col items-center w-[78px] pt-[3px] gap-[5px] text-[#a8a8a8]"><svg class="size-12"><use href="#b-paste"/></svg>Einfügen</button>
                <div class="grid grid-cols-[26px_22px] grid-rows-3 place-items-center">
                    <button aria-label="Ausschneiden"><svg class="size-6"><use href="#s-cut"/></svg></button><span></span>
                    <button aria-label="Kopieren"><svg class="size-6"><use href="#s-copy"/></svg></button><span></span>
                    <button aria-label="Einfügen als"><svg class="size-6"><use href="#s-pasteas"/></svg></button>
                    <button aria-label="Weitere"><svg class="w-2 h-[5px]"><use href="#caret"/></svg></button>
                </div>
            </div>
            <h2 class="text-center leading-[26px] pl-2">Zwischenablage</h2>
        </section>
        <div class="shrink-0 w-[2px] h-[109px] mt-[3px] bg-[#dedede]"></div>

        <section class="shrink-0 w-[245px]">
            <div class="flex h-[93px] pl-[9px]">
                <button class="flex flex-col items-center w-[86px] pt-[2px] gap-[5px] bg-[#cce5eb] border border-[#bcd4f0] text-[#444]"><svg class="size-12"><use href="#b-select"/></svg>Auswählen<svg class="w-2 h-[5px] mt-2 text-black"><use href="#caret"/></svg></button>
                <div class="grid grid-cols-[48px_48px_48px] grid-rows-3">
                    <div class="flex items-center"><button class="w-[30px] pl-1" aria-label="Filter"><svg class="size-6"><use href="#s-filter"/></svg></button></div>
                    <div class="flex items-center"><button class="w-[30px] pl-1" aria-label="Auswahlwerkzeug"><svg class="size-6"><use href="#s-selptr"/></svg></button></div>
                    <div class="flex items-center pl-1"><button class="w-[30px] pl-1" aria-label="Bezug"><svg class="size-6"><use href="#s-flag"/></svg></button><button class="px-[6px]" aria-label="Mehr"><svg class="w-2 h-[5px]"><use href="#caret"/></svg></button></div>
                    <div class="flex items-center bg-[#cce5eb] border border-[#bcd4f0]"><button class="w-[30px] pl-1" aria-label="Überlappend"><svg class="size-6"><use href="#s-box"/></svg></button><button class="px-1" aria-label="Mehr"><svg class="w-2 h-[5px]"><use href="#caret"/></svg></button></div>
                    <div class="flex items-center"><button class="w-[30px] pl-1" aria-label="Gestapelt"><svg class="size-6"><use href="#s-stack"/></svg></button></div>
                    <div class="flex items-center"><button class="w-[30px] pl-1" aria-label="Komponente suchen"><svg class="size-6"><use href="#s-findcube"/></svg></button></div>
                    <div class="flex items-center bg-[#cce5eb] border border-[#bcd4f0]"><button class="w-[30px] pl-1" aria-label="Rahmen"><svg class="size-6"><use href="#s-dash"/></svg></button><button class="px-1" aria-label="Mehr"><svg class="w-2 h-[5px]"><use href="#caret"/></svg></button></div>
                    <div class="flex items-center"><button class="w-[30px] pl-1" aria-label="Tauschen"><svg class="size-6"><use href="#s-swap"/></svg></button><button class="px-2" aria-label="Mehr"><svg class="w-2 h-[5px]"><use href="#caret"/></svg></button></div>
                </div>
            </div>
            <h2 class="text-center leading-[26px] pl-1">Auswahl</h2>
        </section>
        <div class="shrink-0 w-[2px] h-[109px] mt-[3px] bg-[#dedede]"></div>

        <section class="shrink-0 w-[190px]">
            <div class="flex h-[93px] pl-[9px]">
                <button class="flex flex-col items-center w-[62px] pt-[3px] gap-[5px]"><svg class="size-12"><use href="#b-sketch"/></svg>Skizze</button>
                <button class="flex flex-col items-center w-[84px] pt-[3px] gap-[5px]"><svg class="size-12"><use href="#b-sketch3d"/></svg>3D-Skizze</button>
                <div class="grid w-[26px] grid-rows-3 place-items-center">
                    <button aria-label="Ebenen"><svg class="size-6"><use href="#s-planes"/></svg></button>
                    <button aria-label="Skizze kopieren"><svg class="size-6"><use href="#s-skcopy"/></svg></button>
                    <button aria-label="Skizze bearbeiten"><svg class="size-6"><use href="#s-skcube"/></svg></button>
                </div>
            </div>
            <h2 class="text-center leading-[26px] pl-1">Skizze</h2>
        </section>
        <div class="shrink-0 w-[2px] h-[109px] mt-[3px] bg-[#dedede]"></div>

        <section class="shrink-0 w-[197px]">
            <div class="flex h-[93px] pl-[10px]">
                <button class="flex flex-col items-center w-24 pt-[3px] gap-[5px]"><svg class="size-12"><use href="#b-insert"/></svg><span>Komponente<br>einfügen <svg class="inline w-2 h-[5px]"><use href="#caret"/></svg></span></button>
                <button class="flex flex-col items-center w-[87px] pt-[3px] gap-[5px]"><svg class="size-12"><use href="#b-inplace"/></svg><span>Teil vor Ort<br>erstellen <svg class="inline w-2 h-[5px]"><use href="#caret"/></svg></span></button>
            </div>
            <h2 class="text-center leading-[26px] pl-1">Komponenten</h2>
        </section>
        <div class="shrink-0 w-[2px] h-[109px] mt-[3px] bg-[#dedede]"></div>

        <section class="shrink-0 w-[514px]">
            <div class="flex h-[93px] pl-2">
                <button class="flex flex-col items-center w-[174px] pt-[3px] gap-[5px]"><svg class="size-12"><use href="#b-mount"/></svg>Komponentenmontage</button>
                <button class="flex flex-col items-center w-[102px] pt-[3px] gap-[5px]"><svg class="size-12"><use href="#b-magnet"/></svg><span>Magnetisches<br>Fangen</span></button>
                <div class="w-px ml-[6px] mr-1 bg-[#dedede]"></div>
                <div class="grid grid-cols-[31px_31px_32px_16px_31px_32px] grid-rows-3 place-items-center">
                    <button aria-label="FlashFit"><svg class="size-6"><use href="#s-flash"/></svg></button>
                    <button aria-label="Axial ausrichten"><svg class="size-6"><use href="#s-axial"/></svg></button>
                    <button aria-label="Winkel"><svg class="size-6"><use href="#s-angle"/></svg></button><span></span>
                    <button aria-label="Parallel"><svg class="size-6"><use href="#s-par"/></svg></button>
                    <button aria-label="Mittelebene"><svg class="size-6"><use href="#s-gap"/></svg></button>
                    <button aria-label="An/auf"><svg class="size-6"><use href="#s-mate"/></svg></button>
                    <button aria-label="Einsetzen"><svg class="size-6"><use href="#s-pivot"/></svg></button>
                    <button aria-label="Tangential"><svg class="size-6"><use href="#s-tan"/></svg></button><span></span>
                    <button aria-label="Getriebe"><svg class="size-6"><use href="#s-gears"/></svg></button>
                    <button aria-label="Starre Gruppe"><svg class="size-6"><use href="#s-dia"/></svg></button>
                    <button aria-label="Planar ausrichten"><svg class="size-6"><use href="#s-insmate"/></svg></button>
                    <button aria-label="Verbinden"><svg class="size-6"><use href="#s-link"/></svg></button>
                    <button aria-label="Pfad"><svg class="size-6"><use href="#s-path"/></svg></button>
                    <button aria-label="Mehr"><svg class="w-2 h-[5px]"><use href="#caret"/></svg></button>
                    <button aria-label="Koordinatensystem"><svg class="size-6"><use href="#s-axes"/></svg></button>
                    <button aria-label="Kurvenscheibe"><svg class="size-6"><use href="#s-cam"/></svg></button>
                </div>
                <div class="w-px ml-[3px] bg-[#dedede]"></div>
                <div class="grid w-[41px] grid-rows-3 place-items-center">
                    <button aria-label="Beziehungen"><svg class="size-6"><use href="#s-winmate"/></svg></button>
                    <button aria-label="Beziehung wählen"><svg class="size-6"><use href="#s-mateptr"/></svg></button>
                    <button aria-label="Erfassen"><svg class="size-6"><use href="#s-ring"/></svg></button>
                </div>
            </div>
            <h2 class="text-center leading-[26px] pl-1">Zusammenbau</h2>
        </section>
        <div class="shrink-0 w-[2px] h-[109px] mt-[3px] bg-[#dedede]"></div>

        <section class="shrink-0 w-[325px]">
            <div class="flex h-[93px] pl-[9px]">
                <button class="flex flex-col items-center w-[95px] pt-[2px] gap-[5px] bg-[#cce5eb] border border-[#bcd4f0] text-[#444]"><svg class="size-12"><use href="#b-move"/></svg><span>Bei Auswahl<br>verschieben</span></button>
                <button class="flex flex-col items-center w-[100px] pt-[3px] gap-[5px]"><svg class="size-12"><use href="#b-drag"/></svg><span>Komponente<br>ziehen <svg class="inline w-2 h-[5px]"><use href="#caret"/></svg></span></button>
                <button class="flex flex-col items-center w-20 pt-[3px] gap-[5px]"><svg class="size-12"><use href="#b-replace"/></svg><span>Teil<br>ersetzen <svg class="inline w-2 h-[5px]"><use href="#caret"/></svg></span></button>
                <div class="grid w-9 grid-rows-3 place-items-center">
                    <button aria-label="Verschieben"><svg class="size-6"><use href="#s-gmove"/></svg></button>
                    <button aria-label="Übertragen"><svg class="size-6"><use href="#s-gswap"/></svg></button>
                </div>
            </div>
            <h2 class="text-center leading-[26px] pl-1">Ändern</h2>
        </section>
        <div class="shrink-0 w-[2px] h-[109px] mt-[3px] bg-[#dedede]"></div>

        <section class="shrink-0 w-[86px]">
            <div class="flex h-[93px]">
                <div class="grid w-[43px] pl-1 grid-rows-3 place-items-center">
                    <button aria-label="Rotationsmotor"><svg class="size-6"><use href="#s-motrot"/></svg></button>
                    <button aria-label="Linearmotor"><svg class="size-6"><use href="#s-motlin"/></svg></button>
                    <button aria-label="Variablentabellenmotor"><svg class="size-6"><use href="#s-motvar"/></svg></button>
                </div>
                <div class="w-px bg-[#dedede]"></div>
                <div class="grid w-[42px] grid-rows-3 place-items-center">
                    <button aria-label="Motor simulieren"><svg class="size-6"><use href="#s-motsim"/></svg></button>
                </div>
            </div>
            <h2 class="text-center leading-[26px] pl-1">Motoren</h2>
        </section>
        <div class="shrink-0 w-[2px] h-[109px] mt-[3px] bg-[#dedede]"></div>

        <section class="shrink-0 w-[107px]">
            <div class="grid grid-cols-[32px_32px_32px] grid-rows-3 place-items-center h-[93px] pl-[7px]">
                <button aria-label="Koplanar"><svg class="size-6"><use href="#s-fsq"/></svg></button>
                <button aria-label="Konzentrisch"><svg class="size-6"><use href="#s-fcirc"/></svg></button>
                <button aria-label="Symmetrisch"><svg class="size-6"><use href="#s-fmir"/></svg></button>
                <button aria-label="Parallel"><svg class="size-6"><use href="#s-par"/></svg></button>
                <button aria-label="Ausrichten"><svg class="size-6"><use href="#s-fcop"/></svg></button>
                <button aria-label="Gleich"><svg class="size-6"><use href="#s-feq"/></svg></button>
                <button aria-label="Lotrecht"><svg class="size-6"><use href="#s-fperp"/></svg></button>
                <button aria-label="Tangential"><svg class="size-6"><use href="#s-ftan"/></svg></button>
                <button aria-label="Offset"><svg class="size-6"><use href="#s-foff"/></svg></button>
            </div>
            <h2 class="text-center leading-[26px]">Teilflächenb...</h2>
        </section>
        <div class="shrink-0 w-[2px] h-[109px] mt-[3px] bg-[#dedede]"></div>

        <section class="shrink-0 w-[78px]">
            <div class="grid grid-cols-[32px_32px] grid-rows-3 place-items-center h-[93px] pl-2">
                <button aria-label="Rechteckmuster"><svg class="size-6"><use href="#s-prect"/></svg></button>
                <button aria-label="Kreismuster"><svg class="size-6"><use href="#s-pcirc"/></svg></button>
                <button aria-label="Komponenten spiegeln"><svg class="size-6"><use href="#s-pmir"/></svg></button>
                <button aria-label="Klonen"><svg class="size-6"><use href="#s-pcopy"/></svg></button>
                <button aria-label="Duplizieren"><svg class="size-6"><use href="#s-pdup"/></svg></button>
            </div>
            <h2 class="text-center leading-[26px] pl-1">Muster</h2>
        </section>
        <div class="shrink-0 w-[2px] h-[109px] mt-[3px] bg-[#dedede]"></div>

        <section class="shrink-0 w-[241px]">
            <div class="h-[93px] pt-[11px] pl-2">
                <div class="flex items-center gap-1">
                    <div class="relative w-[195px]">
                        <select aria-label="Konfiguration" disabled class="block w-full h-[31px] appearance-none bg-white border border-[#dedede]"><option></option></select>
                        <svg class="absolute right-[7px] top-[13px] w-2 h-[5px] text-[#b5b5b5]"><use href="#caret"/></svg>
                    </div>
                    <button class="opacity-50" aria-label="Konfiguration speichern"><svg class="size-6"><use href="#c-save"/></svg></button>
                </div>
                <div class="grid grid-cols-[repeat(7,31px)] place-items-center mt-[14px]">
                    <button class="opacity-50" aria-label="Anzeigekonfigurationen"><svg class="size-6"><use href="#c-edit"/></svg></button>
                    <button class="opacity-50" aria-label="Explosionsansicht"><svg class="size-6"><use href="#c-expl"/></svg></button>
                    <button class="opacity-50" aria-label="Liste bearbeiten"><svg class="size-6"><use href="#c-list"/></svg></button>
                    <button class="opacity-50" aria-label="Liste kopieren"><svg class="size-6"><use href="#c-doc"/></svg></button>
                    <button class="opacity-50" aria-label="Ansicht erfassen"><svg class="size-6"><use href="#c-cam"/></svg></button>
                    <button class="opacity-50" aria-label="Ansicht ablegen"><svg class="size-6"><use href="#c-camdir"/></svg></button>
                    <button aria-label="Zone"><svg class="size-6"><use href="#c-zone"/></svg></button>
                </div>
            </div>
            <h2 class="text-center leading-[26px] pl-1">Konfigurationen</h2>
        </section>
        <div class="shrink-0 w-[2px] h-[109px] mt-[3px] bg-[#dedede]"></div>

        <section class="shrink-0 w-[46px]">
            <div class="grid grid-rows-3 place-items-center h-[93px] pl-[2px]">
                <button aria-label="Modus"><svg class="size-6"><use href="#m-grid"/></svg></button>
                <button aria-label="Aktualisieren"><svg class="size-6"><use href="#m-ref"/></svg></button>
                <button aria-label="Modus speichern"><svg class="size-6"><use href="#m-save"/></svg></button>
            </div>
            <h2 class="text-center leading-[26px] pl-1">Modi</h2>
        </section>
        <div class="shrink-0 w-[2px] h-[109px] mt-[3px] bg-[#dedede]"></div>

        <button class="flex flex-col items-center shrink-0 w-[85px] h-[93px] pt-[3px] pl-[3px] gap-[5px]"><svg class="size-12"><use href="#b-align"/></svg>Ausrichten<svg class="w-2 h-[5px] mt-2"><use href="#caret"/></svg></button>
        <div class="shrink-0 w-[2px] h-[109px] mt-[3px] bg-[#dedede]"></div>
        <button class="flex flex-col items-center shrink-0 w-[111px] h-[93px] pt-[3px] pl-[3px] gap-[5px]"><svg class="size-12"><use href="#b-style"/></svg>Formatvorlage<svg class="w-2 h-[5px] mt-2"><use href="#caret"/></svg></button>
        <div class="shrink-0 w-[2px] h-[109px] mt-[3px] bg-[#dedede]"></div>
    </div>

    <!-- Prompt bar and document tabs -->
    <div class="flex shrink-0 h-[79px] font-['Open_Sans',sans-serif]">
        <div class="flex flex-col items-center justify-between w-[43px] pt-3 pr-2 overflow-hidden bg-[#f9fbfb]">
            <svg class="w-8 h-8 shrink-0" viewBox="0 0 32 32"><g fill="#eee" stroke="#bbb" stroke-width="1.500"><path d="M11 1H29V19H11Z"/><path d="M17 4V15M23 4V15M15 8H19M21 12H25" fill="none"/><path d="M1 10H10V19H1ZM5 19V30M5 24H13M13 20H22V30H13Z"/></g></svg>
            <svg class="w-8 h-4 shrink-0" viewBox="0 0 32 16"><path d="M2 20V1H29V20" fill="#fff" stroke="#1d3f8f" stroke-width="2"/><circle cx="14" cy="13" r="7" fill="#1468c8" stroke="#0b2f8a" stroke-width="3" stroke-dasharray="3 2"/><circle cx="14" cy="13" r="3" fill="#fff"/><path d="M23 4V10H27" fill="none" stroke="#1d3f8f" stroke-width="2"/></svg>
        </div>
        <div class="flex flex-col flex-1 min-w-0">
            <div class="flex h-[38px] border-t border-t-[#9a9a9a] border-b-2 border-b-[#d0d0d0]">
                <button class="grid place-items-center w-14 h-[33px] bg-[#10789c]" aria-label="Befehlsleiste"><svg class="w-8 h-4" viewBox="0 0 32 16"><path d="M1 1H31V15H1Z" fill="#d8d8d8" stroke="#444"/><path d="M1 1H31V6H1Z" fill="#3fa0bd"/><path d="M4 9H9V12H4ZM13 9H19V12H13ZM23 9H28V12H23Z" fill="#fff" stroke="#444"/></svg></button>
                <p class="pl-[2px] text-[19px] leading-[33px] whitespace-nowrap">Wählen Sie die zu bearbeitenden Komponenten aus, oder klicken Sie auf den Befehl "Komponente einfügen", den Befehl "Teil vor Ort erstellen", die Registerkarte "Teilbibliothek", oder ziehen Sie die Komponenten aus dem Windows Explorer.</p>
            </div>
            <div class="flex items-center h-[41px] pt-[3px] pl-[2px] border-b border-[#006487] text-[17px]">
                <div class="flex items-center w-[133px] h-[35px] pl-5 bg-[#006487] text-white border-x-2 border-[#b0b0b0]">
                    <svg class="w-6 h-[26px]"><use href="#d-asm"/></svg><span class="pl-[3px]">Asm1</span>
                    <button class="ml-auto mr-1" aria-label="Asm1 schließen"><svg class="size-[13px]"><use href="#close"/></svg></button>
                </div>
                <div class="flex items-center w-[330px] h-[31px] pl-[20px] border-r-2 border-[#b0b0b0]">
                    <svg class="w-6 h-[26px]"><use href="#d-part"/></svg><span class="pl-[3px]">item_72459_profil-wfc-8-40x...</span>
                    <button class="ml-auto mr-1" aria-label="Schließen"><svg class="size-[13px]"><use href="#close"/></svg></button>
                </div>
                <div class="flex items-center w-[330px] h-[31px] pl-[20px] border-r-2 border-[#b0b0b0]">
                    <svg class="w-6 h-[26px]"><use href="#d-draft"/></svg><span class="pl-[3px]">item_72459_profil-wfc-8-40x...</span>
                    <button class="ml-auto mr-1" aria-label="Schließen"><svg class="size-[13px]"><use href="#close"/></svg></button>
                </div>
                <div class="flex items-center w-[330px] h-[31px] pl-[20px] border-r-2 border-[#b0b0b0]">
                    <svg class="w-6 h-[26px]"><use href="#d-part"/></svg><span class="pl-[3px]">item_72459_profil-wfc-8-40x...</span>
                    <button class="ml-auto mr-1" aria-label="Schließen"><svg class="size-[13px]"><use href="#close"/></svg></button>
                </div>
                <div class="flex items-center gap-[11px] ml-auto mr-1">
                    <button aria-label="Zurück"><svg class="w-2 h-3" viewBox="0 0 8 12"><path d="M7 1V11L2 6Z" fill="none" stroke="#222"/></svg></button>
                    <button aria-label="Vor"><svg class="w-2 h-3" viewBox="0 0 8 12"><path d="M1 1V11L6 6Z" fill="none" stroke="#222"/></svg></button>
                    <button aria-label="Liste"><svg class="w-3 h-[6px]"><use href="#caret"/></svg></button>
                    <button aria-label="Schließen"><svg class="size-[13px]"><use href="#close"/></svg></button>
                </div>
            </div>
        </div>
    </div>

    <div class="flex flex-1 min-h-0">
        <!-- PathFinder panel -->
        <aside class="flex flex-col shrink-0 w-[503px] mb-px bg-white border-r border-b border-[#2b5f9e]">
            <div class="flex items-center h-[29px] px-[7px] shrink-0 bg-[#10789c] text-white text-[17px] font-['Open_Sans',sans-serif]">
                <svg class="size-8"><use href="#p-find"/></svg><h1 class="pl-[3px]">PathFinder</h1>
                <div class="flex items-center gap-3 ml-auto mr-1">
                    <button aria-label="Optionen"><svg class="w-4 h-3" viewBox="0 0 16 12"><path d="M0 1H16" stroke="#fff" stroke-width="2"/><path d="M1 5H15L8 12Z" fill="#fff"/></svg></button>
                    <button aria-label="Anheften"><svg class="w-3 h-[18px]" viewBox="0 0 12 18"><path d="M3 1H9V10H3ZM1 10H11M6 10V18" fill="none" stroke="#fff" stroke-width="1.600"/></svg></button>
                    <button aria-label="Panel schließen"><svg class="size-[14px]"><use href="#close"/></svg></button>
                </div>
            </div>
            <nav class="flex shrink-0 h-10 mt-[7px] mx-1 bg-[#f4f4f4] border-b-2 border-[#c9c9c9]">
                <button class="grid place-items-center w-[43px] h-10 mr-[3px] bg-white border-t-3 border-[#2b579a]" aria-label="PathFinder"><svg class="size-8"><use href="#p-find"/></svg></button>
                <button class="grid place-items-center w-11 my-[5px] border-r-2 border-[#cfcfcf]" aria-label="Teilbibliothek"><svg class="size-8"><use href="#p-lib"/></svg></button>
                <button class="grid place-items-center w-11 my-[5px] border-r-2 border-[#cfcfcf]" aria-label="Alternative Baugruppen"><svg class="size-8"><use href="#p-alt"/></svg></button>
                <button class="grid place-items-center w-11 my-[5px] border-r-2 border-[#cfcfcf]" aria-label="Layer"><svg class="size-8"><use href="#p-layer"/></svg></button>
                <button class="grid place-items-center w-11 my-[5px] border-r-2 border-[#cfcfcf]" aria-label="Sensoren"><svg class="size-8"><use href="#p-sens"/></svg></button>
                <button class="grid place-items-center w-11 my-[5px] border-r-2 border-[#cfcfcf]" aria-label="Auswahlwerkzeuge"><svg class="size-8"><use href="#p-tool"/></svg></button>
                <button class="grid place-items-center w-11 my-[5px] border-r-2 border-[#cfcfcf]" aria-label="Komponenten"><svg class="size-8"><use href="#p-gray"/></svg></button>
                <button class="grid place-items-center w-11 my-[5px] border-r-2 border-[#cfcfcf]" aria-label="Teilefamilie"><svg class="size-8"><use href="#p-fam"/></svg></button>
                <button class="grid place-items-center w-11 my-[5px] border-r-2 border-[#cfcfcf]" aria-label="Konstruktion"><svg class="size-8"><use href="#p-rod"/></svg></button>
                <button class="grid place-items-center w-11 my-[5px] border-r-2 border-[#cfcfcf]" aria-label="Simulation"><svg class="size-8"><use href="#p-heat"/></svg></button>
            </nav>
            <div class="flex items-center shrink-0 h-8 mx-1 border-b border-[#888]">
                <div class="flex items-center h-full w-14 px-[2px] gap-1 bg-[#d2d2d2]">
                    <button class="grid place-items-center w-[26px] h-[26px] bg-white rounded-xs" aria-label="Filter"><svg class="size-5" viewBox="0 0 20 20"><path d="M1 4H19L12 11V18H8V11Z" fill="#1d5be0" stroke="#0b2f8a"/><path d="M3 5H16" stroke="#5fd0f0" stroke-width="2"/></svg></button>
                    <button class="grid place-items-center w-[19px] h-[26px] bg-white rounded-xs" aria-label="Filteroptionen"><svg class="w-3 h-[6px]"><use href="#caret"/></svg></button>
                </div>
                <input type="text" aria-label="Komponenten suchen" placeholder="Zum Suchen von Komponenten eingeben" class="flex-1 h-full pl-[2px] outline-none placeholder:text-[#666]">
                <button class="mr-1" aria-label="Suchen"><svg class="size-6"><use href="#glass"/></svg></button>
            </div>

            <ul class="flex-1 min-h-0 mr-1 overflow-hidden whitespace-nowrap leading-7 text-[#111]">
                <li class="flex items-center h-7 pl-4"><svg class="w-3 h-2 mr-[10px] text-[#444]"><use href="#caret"/></svg><svg class="w-5 h-[22px] mr-[6px]"><use href="#t-asm"/></svg><svg class="w-[18px] h-5 mr-[7px]"><use href="#t-lock"/></svg>Asm1</li>
                <li class="flex items-center h-7 pl-[45px]"><svg class="w-3 h-2 mr-[10px] text-[#444]"><use href="#caret"/></svg><svg class="w-5 h-[14px] mr-[10px]"><use href="#t-eye"/></svg><svg class="size-6 mr-px"><use href="#s-axes"/></svg>Koordinatensysteme</li>
                <li class="flex items-center h-7 pl-[96px]"><svg class="w-5 h-[14px] mr-[10px]"><use href="#t-eye"/></svg><svg class="size-6 mr-px"><use href="#s-axes"/></svg>Base</li>
                <li class="flex items-center h-7 pl-[45px]"><svg class="w-3 h-2 mr-[10px] text-[#444]"><use href="#caret"/></svg><svg class="w-5 h-[14px] mr-[10px]"><use href="#t-eye"/></svg><svg class="w-[22px] h-[18px] mr-[3px]"><use href="#t-plane"/></svg>Referenzebenen</li>
                <li class="flex items-center h-7 pl-[96px]"><svg class="w-5 h-[14px] mr-[10px]"><use href="#t-eye"/></svg><svg class="w-[22px] h-[18px] mr-[3px]"><use href="#t-plane"/></svg>Top (xy)</li>
                <li class="flex items-center h-7 pl-[96px]"><svg class="w-5 h-[14px] mr-[10px]"><use href="#t-eye"/></svg><svg class="w-[22px] h-[18px] mr-[3px]"><use href="#t-plane"/></svg>Right (yz)</li>
                <li class="flex items-center h-7 pl-[96px]"><svg class="w-5 h-[14px] mr-[10px]"><use href="#t-eye"/></svg><svg class="w-[22px] h-[18px] mr-[3px]"><use href="#t-plane"/></svg>Front (xz)</li>
                <li class="flex items-center h-7 pl-[67px]"><svg class="w-5 h-[14px] mr-[9px] shrink-0"><use href="#t-eye"/></svg><svg class="w-6 h-[22px] mr-1 shrink-0"><use href="#t-part"/></svg><svg class="w-[18px] h-5 mr-[7px] shrink-0"><use href="#t-lock"/></svg>item_72459_profil-wfc-8-40x40-natur_1020_high.</li>
                <li class="flex items-center h-7 pl-[67px]"><svg class="w-5 h-[14px] mr-[9px] shrink-0"><use href="#t-eye"/></svg><svg class="w-6 h-[22px] mr-1 shrink-0"><use href="#t-part"/></svg><svg class="w-[18px] h-5 mr-[7px] shrink-0"><use href="#t-lock"/></svg>item_72459_profil-wfc-8-40x40-natur_1020_high.</li>
                <li class="flex items-center h-7 pl-[67px]"><svg class="w-5 h-[14px] mr-[9px] shrink-0"><use href="#t-eye"/></svg><svg class="w-6 h-[22px] mr-1 shrink-0"><use href="#t-part"/></svg><svg class="w-[18px] h-5 mr-[7px] shrink-0"><use href="#t-lock"/></svg>item_72459_profil-wfc-8-40x40-natur_550_high.p</li>
                <li class="flex items-center h-7 pl-[67px]"><svg class="w-5 h-[14px] mr-[9px] shrink-0"><use href="#t-eye"/></svg><svg class="w-6 h-[22px] mr-1 shrink-0"><use href="#t-part"/></svg><svg class="w-[18px] h-5 mr-[7px] shrink-0"><use href="#t-lock"/></svg>item_72459_profil-wfc-8-40x40-natur_550_high.p</li>
            </ul>
            <div class="flex items-center shrink-0 h-[25px] mx-1 pl-[26px] bg-[#f0f0f0]"><div class="w-[409px] h-[5px] rounded-full bg-[#858585]"></div></div>
            <div class="shrink-0 h-[122px] mx-1 pt-[2px] pl-7 border-t-6 border-[#d3d3d3]">Kein Hauptteil gewählt.</div>
        </aside>

        <!-- Model view -->
        <main class="flex-1 min-w-0 bg-[#fafcfc]">
            <svg class="w-full h-full" viewBox="503 247 2055 1205" preserveAspectRatio="xMidYMid meet">
                <defs>
                    <linearGradient id="railL" gradientUnits="userSpaceOnUse" x1="0" y1="0" x2="0" y2="68">
                        <stop offset="0" stop-color="#d9993c"/><stop offset=".02" stop-color="#ffbc4c"/><stop offset=".1" stop-color="#ffb94a"/><stop offset=".125" stop-color="#c88c38"/><stop offset=".137" stop-color="#946929"/><stop offset=".15" stop-color="#946929"/><stop offset=".16" stop-color="#d9993c"/><stop offset=".18" stop-color="#ffbc4c"/><stop offset=".25" stop-color="#ffbc4c"/><stop offset=".29" stop-color="#e6a542"/><stop offset=".345" stop-color="#946929"/><stop offset=".36" stop-color="#946929"/><stop offset=".366" stop-color="#dc9c3d"/><stop offset=".375" stop-color="#946929"/>
                        <stop offset=".535" stop-color="#946929"/><stop offset=".545" stop-color="#e2a141"/><stop offset=".555" stop-color="#946929"/><stop offset=".57" stop-color="#e2a141"/><stop offset=".585" stop-color="#946929"/><stop offset=".6" stop-color="#e2a141"/><stop offset=".615" stop-color="#aa7830"/><stop offset=".63" stop-color="#cc903a"/><stop offset=".67" stop-color="#d0933b"/><stop offset=".69" stop-color="#edab45"/><stop offset=".735" stop-color="#edab45"/><stop offset=".745" stop-color="#946929"/>
                        <stop offset=".93" stop-color="#946929"/><stop offset=".94" stop-color="#e2a141"/><stop offset=".95" stop-color="#7c5822"/><stop offset=".99" stop-color="#7c5822"/><stop offset="1" stop-color="#dc9c3d"/>
                    </linearGradient>
                    <linearGradient id="railS" gradientUnits="userSpaceOnUse" x1="0" y1="0" x2="0" y2="82">
                        <stop offset="0" stop-color="#d9993c"/><stop offset=".015" stop-color="#ffbc4c"/><stop offset=".13" stop-color="#ffbc4c"/><stop offset=".15" stop-color="#b98030"/><stop offset=".16" stop-color="#8a6226"/><stop offset=".175" stop-color="#f2ae47"/><stop offset=".2" stop-color="#d3963c"/><stop offset=".22" stop-color="#ffbc4c"/><stop offset=".29" stop-color="#f3af47"/><stop offset=".31" stop-color="#ffbc4c"/><stop offset=".41" stop-color="#ffbc4c"/><stop offset=".45" stop-color="#d3963c"/><stop offset=".49" stop-color="#876025"/><stop offset=".5" stop-color="#b98030"/><stop offset=".51" stop-color="#876025"/>
                        <stop offset=".66" stop-color="#876025"/><stop offset=".67" stop-color="#dc9c3d"/><stop offset=".69" stop-color="#c68d38"/><stop offset=".75" stop-color="#d3963c"/><stop offset=".77" stop-color="#edab45"/><stop offset=".8" stop-color="#edab45"/><stop offset=".81" stop-color="#876025"/><stop offset=".955" stop-color="#876025"/><stop offset=".965" stop-color="#dc9c3d"/><stop offset=".975" stop-color="#6f4e1d"/><stop offset="1" stop-color="#dc9c3d"/>
                    </linearGradient>
                    <clipPath id="cBack"><path d="M769 940 1934 668 1957 684V729L847 989Z"/></clipPath>
                    <clipPath id="cFront"><path d="M1082 1124 2243 852 2268 868V912L1107 1185 1098 1140Z"/></clipPath>
                    <clipPath id="cLeft"><path d="M722 957 725 951 740 946 751 954 750 947 767 940 1104 1140 1062 1196 726 998 723 984 726 980 737 976 725 970Z"/></clipPath>
                    <clipPath id="cRight"><path d="M1934 667 1947 662 1961 670 1957 662 1973 656 2311 856 2268 912 1957 729 1955 682Z"/></clipPath>
                    <g id="endCap">
                        <path d="M70 130 142 104 186 100 190 222 150 236 118 224 70 246Z" fill="#d4973c"/>
                        <g fill="#926829" stroke="#f0ae47" stroke-width="3" stroke-linejoin="round">
                            <path d="M62 170V130Q62 119 74 116L108 108 110 117 90 124 90 130 112 148 130 146 150 142 164 118 160 106 142 110 142 102 184 93Q194 94 194 106L196 140 180 134 176 122 156 152 152 180 182 208 186 206 184 180 198 174 200 226Q198 237 186 239L150 243 148 230 166 226 164 216 138 196 118 202 98 226 98 238 118 236 120 248 78 259Q64 258 64 246L62 204 76 204 80 218 104 188V166L76 148 76 168Z"/>
                            <circle cx="128" cy="173" r="12" fill="#d4973c"/>
                        </g>
                        <path d="M76 156 100 170V184L78 176ZM160 162 180 174V190L162 180Z" fill="none" stroke="#f0ae47" stroke-width="3"/>
                        <path d="M122 230 144 238 146 244 122 247Z" fill="#fafcfc"/>
                    </g>
                </defs>

                <g clip-path="url(#cBack)"><rect x="760" y="0" width="1210" height="69" fill="url(#railL)" transform="matrix(1 -.2338 0 1 0 1119.800)"/></g>
                <g clip-path="url(#cRight)"><rect x="1930" y="-1" width="390" height="84" fill="url(#railS)" transform="matrix(1 .591 0 1 0 -510)"/></g>
                <path d="M1955 683V729" stroke="#edab45" stroke-width="1.500"/>
                <path d="M1934 667 1955 682 2268 866" fill="none" stroke="#d9993c"/>

                <!-- Reference planes -->
                <g fill="none" stroke="#777">
                    <path d="M1449 872 1580 842 1588 980 1457 1011Z"/>
                    <path d="M1477 832 1551 875 1558 1014M1477 832 1485 978 1548 1015"/>
                    <path d="M1408 920 1551 887 1629 933 1485 967Z"/>
                    <path d="M1457 1003 1489 996V1004M1485 969 1504 980V988M1419 918 1435 930 1428 932"/>
                </g>

                <g clip-path="url(#cFront)"><rect x="1070" y="0" width="1210" height="69" fill="url(#railL)" transform="matrix(1 -.2343 0 1 0 1377.400)"/></g>
                <g clip-path="url(#cLeft)"><rect x="715" y="-1" width="400" height="84" fill="url(#railS)" transform="matrix(1 .589 0 1 0 487.500)"/></g>
                <use href="#endCap" transform="translate(1040 1110) scale(.3333)"/>
                <use href="#endCap" transform="translate(2248 824) scale(.3333)"/>

                <!-- Origin triad -->
                <path d="M1518 927 1516 880" stroke="#0000c8" stroke-width="5"/><path d="M1515 860 1521 883 1510 883Z" fill="#0000c8"/>
                <path d="M1518 927 1562 917" stroke="#00c81a" stroke-width="5"/><path d="M1580 913 1559 911 1561 922Z" fill="#00c81a"/>
                <circle cx="1518" cy="927" r="7" fill="#e8dc10" stroke="#a89c00"/>
                <path d="M1521 929 1541 941" stroke="#e00000" stroke-width="5"/><path d="M1551 947 1542 935 1536 944Z" fill="#e00000"/>
                <g font-family="Liberation Sans" font-size="15" text-anchor="middle"><text x="1512" y="851" fill="#0000e8">Z</text><text x="1594" y="914" fill="#00e020">Y</text><text x="1558" y="956" fill="#f00000">X</text></g>

                <!-- View cube -->
                <g stroke="#aaa" stroke-linejoin="round"><path d="M2411 1319 2475 1307 2514 1322 2443 1337Z" fill="#fdfdfd"/><path d="M2411 1319 2443 1337 2449 1413 2418 1386Z" fill="#fbfbfb"/><path d="M2443 1337 2514 1322 2515 1393 2449 1413Z" fill="#eef0f0"/></g>
                <g font-family="Liberation Sans" fill="#555" text-anchor="middle"><text font-size="16" transform="translate(2482 1374) rotate(-14)">RECHTS</text><text font-size="11" transform="translate(2427 1370) rotate(50)">VORNE</text><text font-size="10" transform="translate(2460 1324) rotate(30)">OBEN</text></g>
                <path d="M2463 1356 2461 1328" stroke="#8888fa" stroke-width="2"/><path d="M2461 1322 2464 1330H2458Z" fill="#8888fa"/>
                <path d="M2463 1356 2488 1350" stroke="#8af29a" stroke-width="2"/><path d="M2495 1349 2487 1347V1353Z" fill="#8af29a"/>
                <path d="M2463 1356 2478 1365" stroke="#f28a8a" stroke-width="2"/><path d="M2481 1367 2475 1366 2478 1361Z" fill="#f28a8a"/>
                <circle cx="2463" cy="1356" r="3" fill="#e8dc10" stroke="#a89c00"/>
            </svg>
        </main>
    </div>

    <!-- Status bar -->
    <footer class="flex items-center shrink-0 h-8 pt-[3px] border-b-2 border-[#aab6bf] bg-[#006487] text-white">
        <p class="ml-auto mr-[69px] text-[17px] font-['Open_Sans',sans-serif]">0 Elemente sind ausgewählt</p>
        <div class="grid grid-cols-[repeat(9,34px)] place-items-center">
            <button aria-label="Zoombereich"><svg class="size-6"><use href="#z-area"/></svg></button>
            <button aria-label="Zoom"><svg class="size-6"><use href="#z-zoom"/></svg></button>
            <button aria-label="Einpassen"><svg class="size-6"><use href="#z-fit"/></svg></button>
            <button aria-label="Verschieben"><svg class="size-6"><use href="#z-pan"/></svg></button>
            <button aria-label="Drehen"><svg class="size-6"><use href="#z-rot"/></svg></button>
            <button aria-label="Ansicht hinzufügen"><svg class="size-6"><use href="#z-add"/></svg></button>
            <button aria-label="Ansichtsausrichtung"><svg class="size-6"><use href="#z-view"/></svg></button>
            <button aria-label="Ansichtsformat"><svg class="size-6"><use href="#z-style"/></svg></button>
            <button aria-label="Komponenten"><svg class="size-6"><use href="#z-comp"/></svg></button>
        </div>
        <div class="flex items-center pl-1 pb-1">
            <button aria-label="Verkleinern"><svg class="size-5" viewBox="0 0 20 20"><circle cx="10" cy="10" r="10" fill="#fff"/><path d="M4 10H16" stroke="#e06f06" stroke-width="1.800"/></svg></button>
            <input type="range" aria-label="Zoomfaktor" value="22" class="appearance-none w-[170px] h-5 mx-[6px] mt-1 bg-transparent [&::-webkit-slider-runnable-track]:h-px [&::-webkit-slider-runnable-track]:bg-white [&::-webkit-slider-thumb]:appearance-none [&::-webkit-slider-thumb]:w-[11px] [&::-webkit-slider-thumb]:h-[17px] [&::-webkit-slider-thumb]:-mt-[12px] [&::-webkit-slider-thumb]:bg-[linear-gradient(90deg,white_5px,#e06f06_5px,#e06f06_6px,white_6px)] [&::-webkit-slider-thumb]:[clip-path:polygon(0_0,100%_0,100%_75%,50%_100%,0_75%)]">
            <button aria-label="Vergrößern"><svg class="size-5" viewBox="0 0 20 20"><circle cx="10" cy="10" r="10" fill="#fff"/><path d="M4 10H16M10 4V16" stroke="#e06f06" stroke-width="1.800"/></svg></button>
        </div>
        <div class="flex items-center pl-3 gap-4 mr-[2px]">
            <button aria-label="YouTube"><svg class="w-[22px] h-[14px]" viewBox="0 0 22 14"><rect width="22" height="14" rx="3" fill="#f00"/><path d="M8 4 14 7 8 10Z" fill="#fff"/></svg></button>
            <button aria-label="Aufnehmen"><svg class="size-[22px]" viewBox="0 0 22 22"><circle cx="11" cy="11" r="10.500" fill="#d6d6d6"/><circle cx="11" cy="11" r="5.500" fill="#fff"/><circle cx="11" cy="11" r="4" fill="#e00000"/></svg></button>
            <button aria-label="Teilen"><svg class="w-[22px] h-[22px]" viewBox="0 0 22 22"><rect width="22" height="22" rx="5" fill="#fff"/><path d="M4 11V18H18V11M11 14V4M7 8 11 4 15 8" fill="none" stroke="#e8404a" stroke-width="1.300"/></svg></button>
        </div>
    </footer>
</body>
</html>
